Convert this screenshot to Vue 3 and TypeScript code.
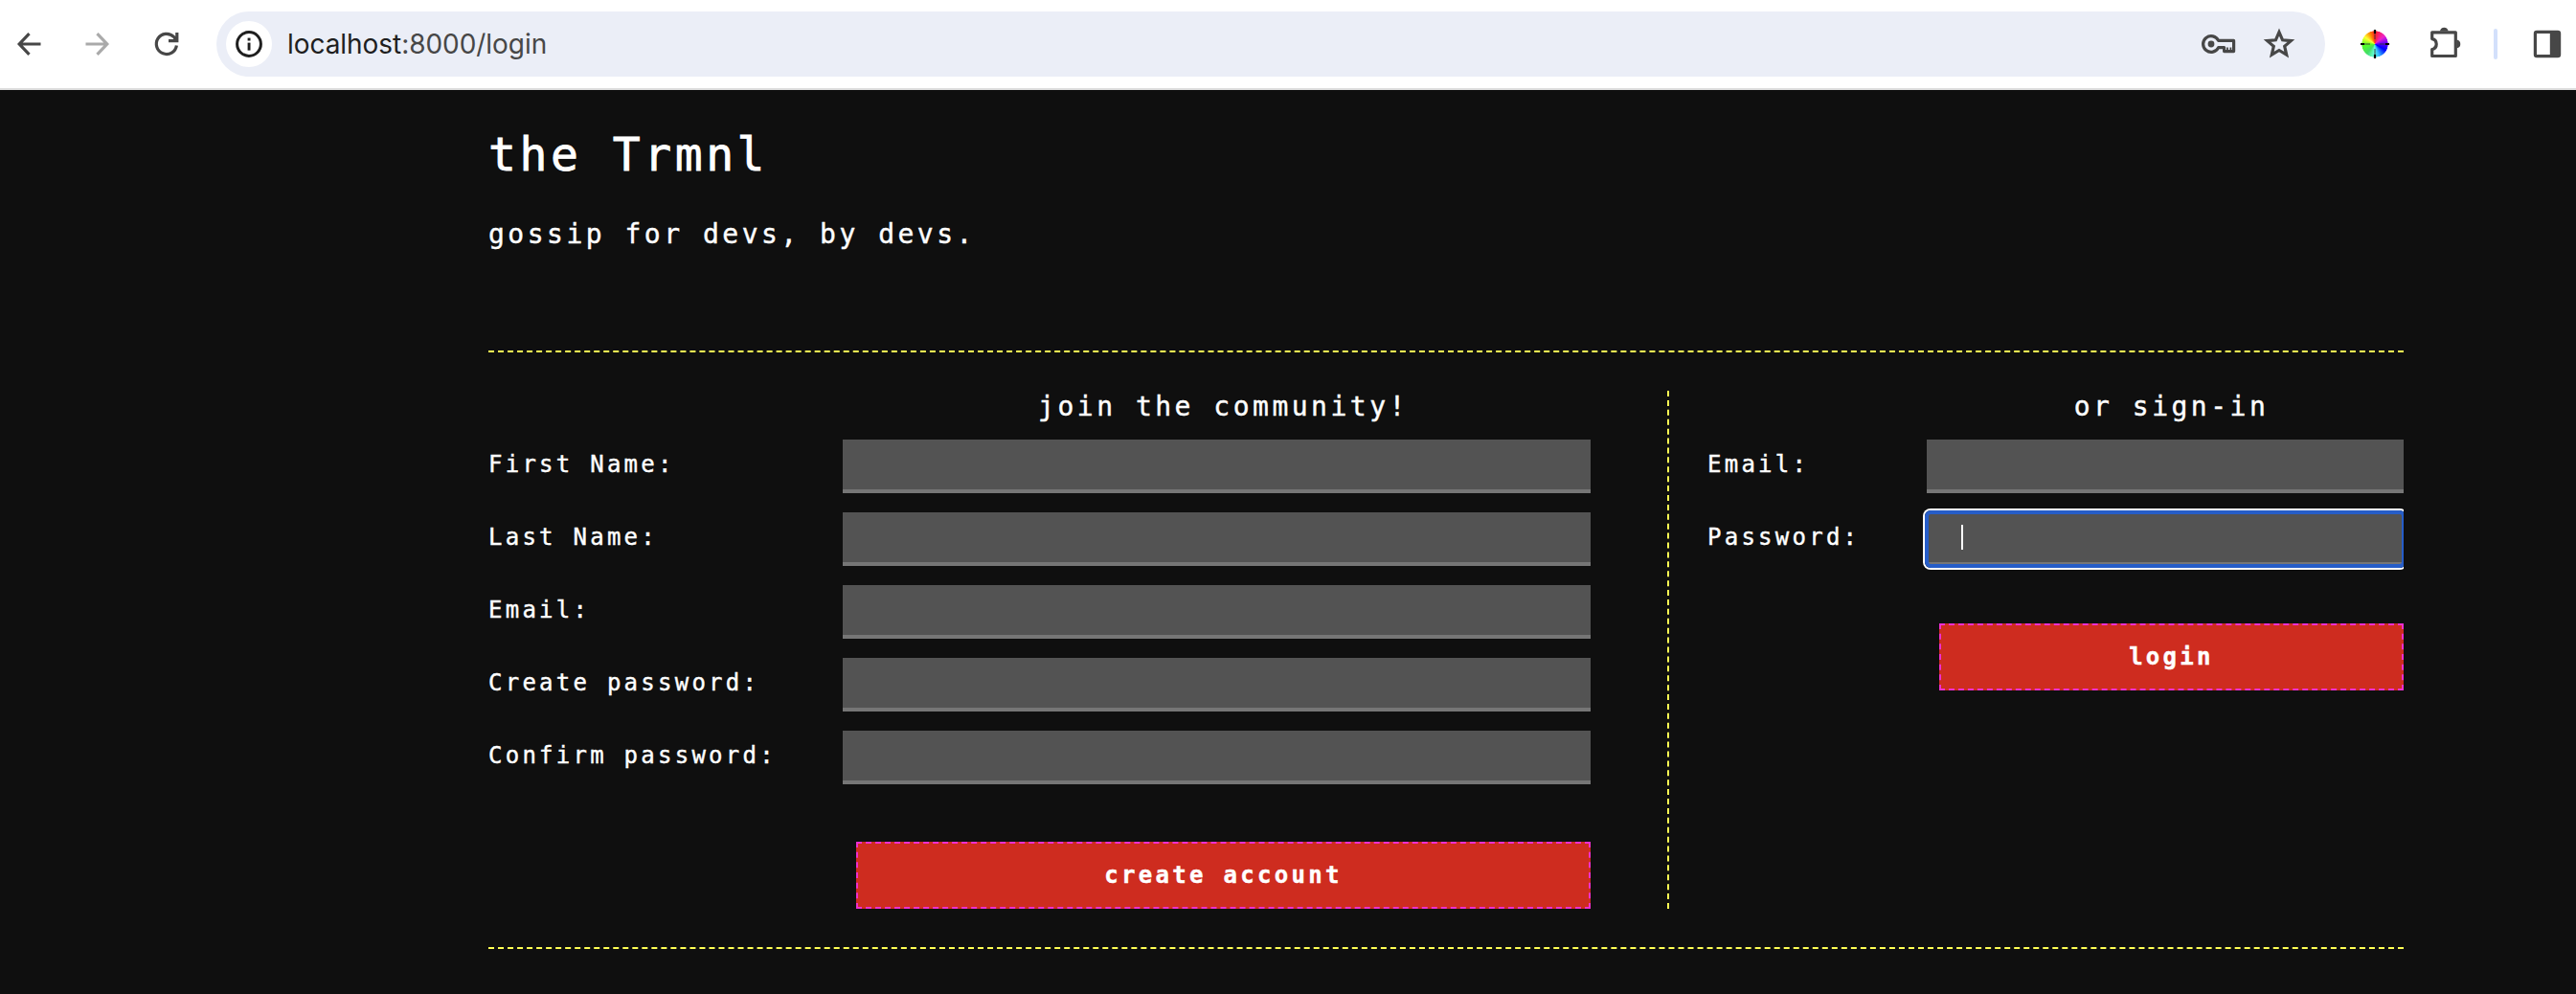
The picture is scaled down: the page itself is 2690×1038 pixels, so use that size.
<script setup lang="ts">
interface Field {
  label: string
  type: string
  focused?: boolean
}

const joinFields: Field[] = [
  { label: 'First Name:', type: 'text' },
  { label: 'Last Name:', type: 'text' },
  { label: 'Email:', type: 'email' },
  { label: 'Create password:', type: 'password' },
  { label: 'Confirm password:', type: 'password' },
]

const loginFields: Field[] = [
  { label: 'Email:', type: 'email' },
  { label: 'Password:', type: 'password', focused: true },
]
</script>

<template>
  <div class="window">
    <header class="toolbar">
      <div class="nav">
        <svg class="icon" viewBox="0 0 36 36" width="36" height="36">
          <path d="M18.5 7.2 L8.2 18 L18.5 28.8 M8.5 18 H30.5" />
        </svg>
        <svg class="icon dim" viewBox="0 0 36 36" width="36" height="36">
          <path d="M17.5 7.2 L27.8 18 L17.5 28.8 M27.5 18 H5.5" />
        </svg>
        <svg class="icon" viewBox="0 0 36 36" width="36" height="36">
          <path d="M28.4 19.4 A10.6 10.6 0 1 1 25.4 10.4 L28 13" />
          <path d="M28.8 6 V14.6 H20" />
          <path d="M29 9 V15 H23 Z" class="solid" />
        </svg>
      </div>

      <div class="omnibox">
        <span class="site-info">
          <svg viewBox="0 0 28 28" width="28" height="28">
            <circle cx="14" cy="14" r="12.4" fill="none" stroke="#1f1f1f" stroke-width="3" />
            <rect x="12.6" y="12.6" width="2.9" height="8" fill="#1f1f1f" />
            <rect x="12.6" y="7.6" width="2.9" height="2.9" fill="#1f1f1f" />
          </svg>
        </span>
        <span class="url"><b>localhost</b>:8000/login</span>
        <svg class="key" viewBox="0 0 38 22" width="38" height="22">
          <path d="M18.6 7.4 H34.6 V18.6 H24.6 V14.6 H18.6 A8.4 8.4 0 1 1 18.6 7.4 Z" />
          <circle cx="11" cy="11" r="3.4" class="solid" />
          <path d="M28 17.5 V14.6 M31.4 17.5 V14.6" class="teeth" />
        </svg>
        <svg class="star" viewBox="0 0 34 32" width="34" height="32">
          <path d="M17 3.6 L20.6 11.8 L29.4 12.6 L22.7 18.4 L24.7 27.2 L17 22.5 L9.3 27.2 L11.3 18.4 L4.6 12.6 L13.4 11.8 Z" />
        </svg>
      </div>

      <div class="extensions">
        <span class="wheel">
          <svg viewBox="0 0 30 30" width="30" height="30">
            <path d="M15 3 V10 M15 20 V27 M3 15 H10 M20 15 H27" stroke="#333" stroke-opacity="0.6" stroke-width="1.4" />
            <path d="M15 0 V4 M15 26 V30 M0 15 H4 M26 15 H30" stroke="#000" stroke-width="2.2" />
          </svg>
        </span>
        <svg class="puzzle" viewBox="0 0 34 34" width="34" height="34">
          <path d="M3.2 4.8 H27.3 V29.5 H2.7 V22.6 A5.6 5.6 0 0 0 2.7 11.6 V4.8 Z" />
          <path d="M10.9 3.6 A4.5 4.9 0 0 1 19.7 3.6 Z M28.4 12.6 A4.9 4.5 0 0 1 28.4 21.4 Z" class="solid" />
        </svg>
        <span class="separator"></span>
        <svg class="panel" viewBox="0 0 30 30" width="30" height="30">
          <rect x="2.4" y="2.4" width="25.2" height="25.2" rx="1.6" />
          <rect x="17.8" y="2" width="10" height="26" class="solid" />
        </svg>
      </div>
    </header>

    <main class="page">
      <h1>the Trmnl</h1>
      <p class="tagline">gossip for devs, by devs.</p>

      <section class="forms">
        <form class="join" @submit.prevent>
          <h2>join the community!</h2>
          <div v-for="field in joinFields" :key="field.label" class="row">
            <label>{{ field.label }}</label>
            <div class="input" :data-type="field.type"></div>
          </div>
          <button type="submit">create account</button>
        </form>
        <form class="login" @submit.prevent>
          <h2>or sign-in</h2>
          <div v-for="field in loginFields" :key="field.label" class="row" :class="{ active: field.focused }">
            <label>{{ field.label }}</label>
            <div class="input" :class="{ focused: field.focused }" :data-type="field.type">
              <span v-if="field.focused" class="caret"></span>
            </div>
          </div>
          <button type="submit">login</button>
        </form>
      </section>
    </main>
  </div>
</template>

<style>
body {
  margin: 0;
  background: #0f0f0f;
}
</style>

<style scoped>
.window {
  width: 2690px;
  height: 1038px;
  overflow: hidden;
  background: #0f0f0f;
  box-sizing: border-box;
}
.window * {
  box-sizing: border-box;
}
.toolbar {
  height: 94px;
  display: flex;
  align-items: center;
  background: #fff;
  border-bottom: 2px solid #dedede;
}
.nav {
  width: 226px;
  display: flex;
  gap: 36px;
  padding-left: 12px;
}
svg {
  display: block;
  flex: none;
  overflow: visible;
}
.icon path,
.key path,
.star path,
.puzzle path,
.panel rect {
  fill: none;
  stroke: #474747;
  stroke-width: 3.2;
}
.icon.dim path {
  stroke: #aaa;
}
.key path,
.puzzle path {
  stroke-linejoin: round;
}
.key .teeth {
  stroke-width: 1.8;
}
.toolbar svg .solid {
  fill: #474747;
  stroke: none;
}
.omnibox {
  width: 2202px;
  height: 68px;
  display: flex;
  align-items: center;
  border-radius: 34px;
  background: #ebeef7;
  padding-left: 10px;
}
.site-info {
  width: 48px;
  height: 48px;
  display: flex;
  align-items: center;
  justify-content: center;
  border-radius: 50%;
  background: #fff;
}
.url {
  margin-left: 16px;
  flex: 1;
  font: 28px/36px Inter, sans-serif;
  letter-spacing: -0.05px;
  color: #474747;
}
.url b {
  font-weight: 400;
  color: #1f1f1f;
}
.key {
  margin-right: 27px;
}
.star {
  margin-right: 31px;
}
.extensions {
  display: flex;
  align-items: center;
  flex: 1;
}
.wheel {
  width: 30px;
  height: 30px;
  margin-left: 37px;
  display: block;
  background: radial-gradient(circle, transparent 13.3px, #fff 14px),
    conic-gradient(#f22, #e2c 50deg, #60f 85deg, #00f 120deg, #3bf 160deg, #6fd 185deg, #4d6 220deg, #5f2 265deg, #ff3 305deg, #f80 335deg, #f22);
}
.puzzle {
  margin-left: 42px;
}
.separator {
  width: 4px;
  height: 32px;
  margin-left: 33px;
  border-radius: 2px;
  background: #d3e0fb;
}
.panel {
  margin-left: 37px;
}
.page {
  width: 2000px;
  margin-left: 510px;
  padding-top: 37px;
  color: #fff;
  font-family: 'DejaVu Sans Mono', monospace;
  -webkit-text-stroke: 0.4px #fff;
}
h1 {
  margin: 0;
  font-size: 48px;
  line-height: 60px;
  font-weight: 400;
  letter-spacing: 3.55px;
  -webkit-text-stroke-width: 0.8px;
}
.tagline {
  margin: 34px 0 0;
  height: 141px;
  font-size: 28px;
  line-height: 40px;
  letter-spacing: 3.5px;
}
.forms {
  height: 625px;
  display: flex;
  padding: 40px 0;
  border-top: 2px dashed #ffff54;
  border-bottom: 2px dashed #ffff54;
}
form {
  display: flex;
  flex-direction: column;
}
.join {
  width: 1233px;
  padding-right: 80px;
  border-right: 2px dashed #ffff54;
}
.login {
  width: 767px;
  padding-left: 40px;
}
h2 {
  margin: 0 0 18px;
  text-align: center;
  font-size: 28px;
  line-height: 33px;
  font-weight: 400;
  letter-spacing: 3.5px;
}
.join h2,
.join button {
  margin-left: 384px;
}
.login h2,
.login button {
  margin-left: 242px;
}
.row {
  display: flex;
  height: 56px;
  margin-bottom: 20px;
}
label {
  width: 370px;
  flex: none;
  font-size: 24px;
  line-height: 52px;
  letter-spacing: 3.25px;
}
.login label {
  width: 229px;
}
.input {
  flex: 1;
  background: #535353;
  border-bottom: 4px solid #767676;
}
.login .row {
  overflow: hidden;
  margin: -4px 0 20px -4px;
  padding: 4px 0 0 4px;
  height: 60px;
}
.login .row.active {
  height: 64px;
  padding-bottom: 4px;
  margin-bottom: 16px;
}
.input.focused {
  position: relative;
}
.input.focused::after {
  content: '';
  position: absolute;
  inset: -2px -2px -6px;
  border: 4px solid #265dc8;
  border-radius: 6px;
  box-shadow: 0 0 0 2px #fff;
}
.caret {
  display: block;
  width: 2px;
  height: 26px;
  margin: 13px 0 0 36px;
  background: #fff;
}
button {
  height: 70px;
  margin-top: 40px;
  padding: 0;
  flex: none;
  background: #ce2c1f;
  border: 2px dashed #ed2fd0;
  color: #fff;
  font: bold 24px/30px 'DejaVu Sans Mono', monospace;
  letter-spacing: 3.3px;
}
</style>
